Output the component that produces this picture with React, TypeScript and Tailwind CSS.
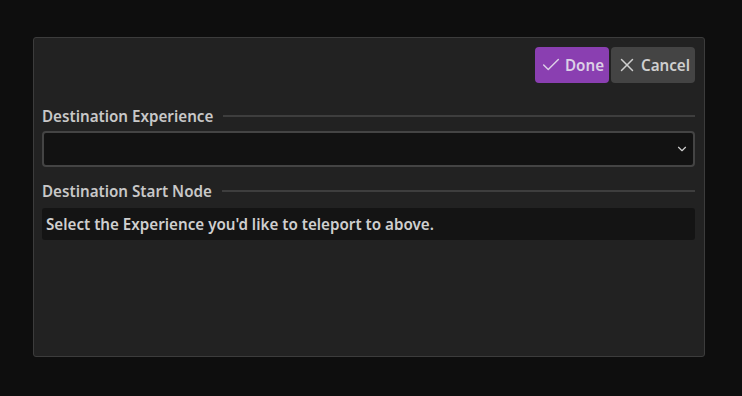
import { Check, X, ChevronDown } from "lucide-react";

export default function App() {
  return (
    <div
      className="w-[742px] h-[396px] bg-[#0e0e0e] pt-[37px] pl-[33px]"
      style={{ fontFamily: '"Noto Sans", sans-serif' }}
    >
      <div className="w-[672px] h-[320px] bg-[#222222] border border-[#3c3c3c] rounded-[3px] pl-[8px] pr-[9px] pt-[9px]">
        <div className="flex justify-end gap-[2px]">
          <button className="h-[36px] w-[74px] rounded-[4px] bg-[#8a3fb1] text-[#dcd0e6] flex items-center justify-center gap-[3px] text-[15.2px] font-semibold">
            <Check size={22} strokeWidth={1.6} />
            Done
          </button>
          <button className="h-[36px] w-[84px] rounded-[4px] bg-[#444444] text-[#cfcfcf] flex items-center justify-center gap-[3px] text-[15.2px] font-semibold">
            <X size={22} strokeWidth={1.6} />
            Cancel
          </button>
        </div>

        <div className="flex items-center gap-[10px] mt-[23px]">
          <span className="text-[15.2px] font-semibold text-[#c8c8c8] leading-[20px]">Destination Experience</span>
          <div className="flex-1 h-[2px] bg-[#3e3e3e]" />
        </div>
        <div className="mt-[5px] h-[36px] rounded-[4px] bg-[#121212] border-2 border-[#444444] flex items-center justify-end pr-[4px]">
          <ChevronDown size={14} strokeWidth={2} className="text-[#cfcfcf]" />
        </div>

        <div className="flex items-center gap-[10px] mt-[14px]">
          <span className="text-[15.2px] font-semibold text-[#c8c8c8] leading-[20px]">Destination Start Node</span>
          <div className="flex-1 h-[2px] bg-[#3e3e3e]" />
        </div>
        <div className="mt-[7px] h-[32px] rounded-[3px] bg-[#141414] flex items-center px-[4px]">
          <span className="text-[15.2px] font-semibold text-[#cfcfcf]">Select the Experience you'd like to teleport to above.</span>
        </div>
      </div>
    </div>
  );
}
